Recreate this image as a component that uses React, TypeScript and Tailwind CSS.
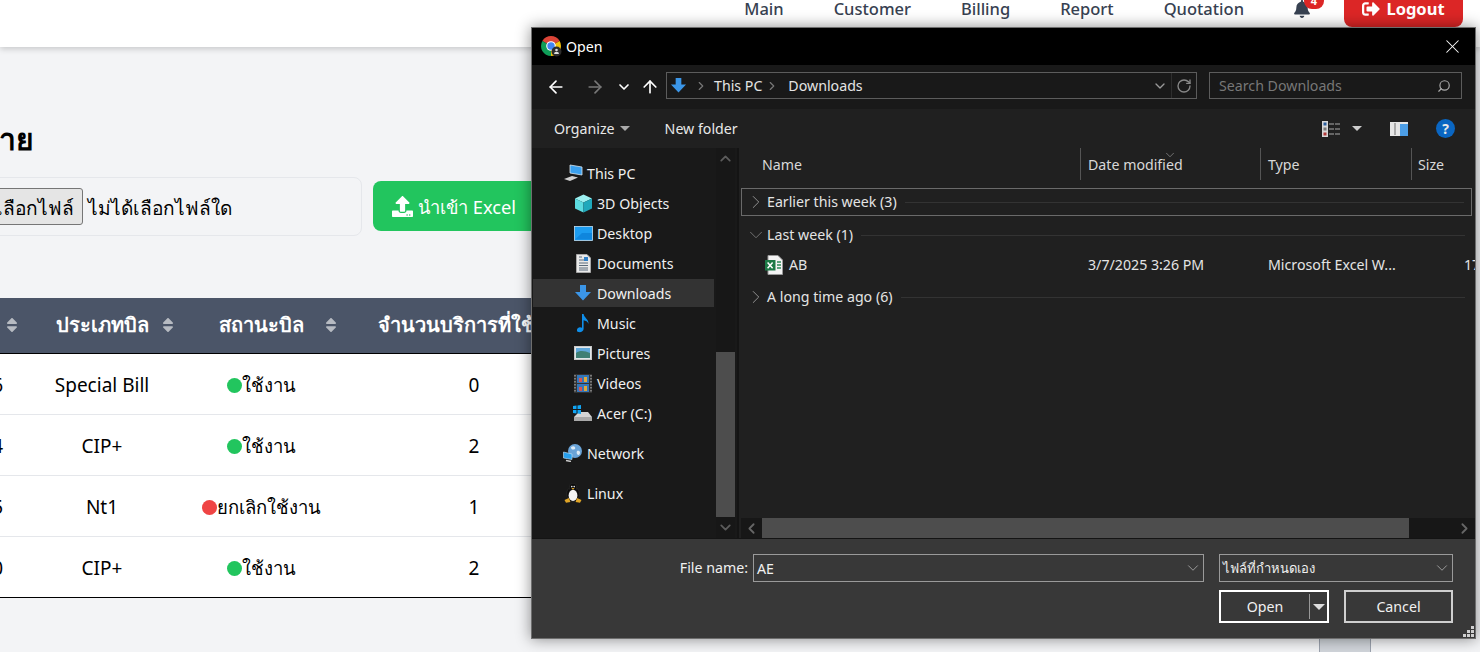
import { ArrowLeft, ArrowRight, ArrowUp, ChevronDown, ChevronLeft, ChevronRight, ChevronUp, RotateCw, Search, X } from "lucide-react";
import { FaBell, FaSignOutAlt, FaSort, FaUpload } from "react-icons/fa";
import React from "react";

const rows = [
  { id: "6", type: "Special Bill", on: true, count: 0 },
  { id: "4", type: "CIP+", on: true, count: 2 },
  { id: "5", type: "Nt1", on: false, count: 1 },
  { id: "0", type: "CIP+", on: true, count: 2 },
];

const ChromeIcon = () => (
  <svg width="21" height="21" viewBox="0 0 21 21">
    <path d="M10 10 L1.34 5 A10 10 0 0 1 18.66 5 Z" fill="#db4437" />
    <path d="M10 10 L18.66 5 A10 10 0 0 1 10 20 Z" fill="#f4c20d" />
    <path d="M10 10 L10 20 A10 10 0 0 1 1.34 5 Z" fill="#0f9d58" />
    <circle cx="10" cy="10" r="4.8" fill="#fff" />
    <circle cx="10" cy="10" r="3.7" fill="#4285f4" />
    <circle cx="15.5" cy="15.5" r="5" fill="#2b2b2b" />
    <circle cx="15.5" cy="14" r="1.3" fill="#ddd" />
    <path d="M13 18 a2.5 2.2 0 0 1 5 0 Z" fill="#ddd" />
  </svg>
);

const DownloadArrow = ({ size = 18 }: { size?: number }) => (
  <svg width={size} height={size} viewBox="0 0 18 18">
    <path d="M6 1 H12 V8 H17 L9 16.5 L1 8 H6 Z" fill="#3b96e8" />
  </svg>
);

const ExcelIcon = () => (
  <svg width="18" height="20" viewBox="0 0 18 20">
    <path d="M3 0.5 H13 L17.5 5 V19.5 H3 Z" fill="#f4f4f4" stroke="#9a9a9a" />
    <path d="M12 7 H16 M12 10 H16 M12 13 H16" stroke="#2b8a57" strokeWidth="1.4" />
    <rect x="0" y="5" width="10.5" height="10.5" fill="#1d7a46" />
    <path d="M2.6 7.4 L7.6 13.2 M7.6 7.4 L2.6 13.2" stroke="#fff" strokeWidth="1.5" />
  </svg>
);

const navIcons: Record<string, React.ReactNode> = {
  pc: (
    <svg width="20" height="18" viewBox="0 0 20 18">
      <path d="M7 1 L19 3 V11 L7 9 Z" fill="#3aa0ee" stroke="#d8e6f0" strokeWidth="0.8" />
      <path d="M1 15 L9 12 L15 13.5 L7 17 Z" fill="#d0d0d0" />
    </svg>
  ),
  cube: (
    <svg width="19" height="19" viewBox="0 0 19 19">
      <path d="M9.5 0.5 L18 4.5 L9.5 8.5 L1 4.5 Z" fill="#9cf0f0" />
      <path d="M1 4.5 L9.5 8.5 V18.5 L1 14.5 Z" fill="#5cdbe0" />
      <path d="M18 4.5 L9.5 8.5 V18.5 L18 14.5 Z" fill="#1fa8bb" />
    </svg>
  ),
  desktop: (
    <svg width="19" height="15" viewBox="0 0 19 15">
      <rect x="0.5" y="0.5" width="18" height="14" fill="#1c9cf0" stroke="#bfe0f5" strokeWidth="0.8" />
      <path d="M1 13.5 L8 7 L18 7 V13.5 Z" fill="#0f86dd" />
    </svg>
  ),
  docs: (
    <svg width="15" height="19" viewBox="0 0 15 19">
      <path d="M0.5 0.5 H11 L14.5 4 V18.5 H0.5 Z" fill="#e9e9e9" stroke="#a8a8a8" />
      <path d="M3 3 H6 M3 6 H8 M3 9 H12 M3 11.5 H12 M3 14 H12 M3 16 H12" stroke="#5b6b7a" />
      <path d="M8 3 H12 V7 H8 Z" fill="#2f80c8" />
    </svg>
  ),
  down: <DownloadArrow size={18} />,
  music: (
    <svg width="14" height="20" viewBox="0 0 14 20">
      <path d="M6 1 H7.6 C8 5 13 6 12.4 11 C12 8.4 9.6 7.6 7.6 7.2 V16 C7.6 18.4 4.6 19.6 2.4 19 C0 18.2 0.8 15 3.2 14.4 C4.2 14.2 5.4 14.4 6 14.8 Z" fill="#0f8ee9" />
    </svg>
  ),
  pics: (
    <svg width="18" height="14" viewBox="0 0 18 14">
      <rect x="0.5" y="0.5" width="17" height="13" fill="#dfe6ea" stroke="#c8c8c8" />
      <rect x="2" y="2" width="14" height="5" fill="#5fa7da" />
      <path d="M2 7 C6 4 11 5 16 7 V12 H2 Z" fill="#3f7f74" />
    </svg>
  ),
  video: (
    <svg width="18" height="19" viewBox="0 0 18 19">
      <rect width="18" height="19" fill="#333" />
      <path d="M1 1 V18 M17 1 V18" stroke="#999" strokeWidth="1.4" strokeDasharray="1.5 1.5" />
      <rect x="3" y="1" width="12" height="8" fill="#3476b9" />
      <rect x="3" y="10" width="12" height="8" fill="#3476b9" />
      <rect x="5" y="4" width="3" height="4" fill="#d9534f" />
      <rect x="10" y="3" width="3" height="5" fill="#e0a93b" />
      <rect x="5" y="13" width="3" height="4" fill="#d9534f" />
      <rect x="10" y="12" width="3" height="5" fill="#e0a93b" />
    </svg>
  ),
  drive: (
    <svg width="20" height="17" viewBox="0 0 20 17">
      <path d="M1 12 L6 7 H15 L19 12 V16 H1 Z" fill="#d5d5d5" />
      <rect x="1" y="12" width="18" height="4" fill="#a9a9a9" />
      <path d="M0 1 L3.5 0.5 V4 H0 Z M4.5 0.4 L8 0 V4 H4.5 Z M0 5 H3.5 V8.5 L0 8 Z M4.5 5 H8 V9 L4.5 8.6 Z" fill="#10a5f5" />
    </svg>
  ),
  network: (
    <svg width="20" height="18" viewBox="0 0 20 18">
      <circle cx="12" cy="7" r="7" fill="#6aa4d8" />
      <path d="M8 3 C11 1 13 3 12 5 C10 6 8 6 8 3 Z M14 7 C17 6 18 9 16 11 C14 11 13 9 14 7 Z" fill="#dce9f3" />
      <path d="M0.5 8 L9 10 V15.5 L0.5 14 Z" fill="#28a0ee" stroke="#cfe4f3" strokeWidth="0.6" />
      <path d="M3 16.5 L8 17.5" stroke="#ccc" strokeWidth="1.4" />
    </svg>
  ),
  linux: (
    <svg width="18" height="20" viewBox="0 0 18 20">
      <ellipse cx="9" cy="11" rx="6.4" ry="7.5" fill="#0c0c0c" stroke="#3a3a3a" strokeWidth="0.4" />
      <ellipse cx="9" cy="4.4" rx="3.6" ry="4.2" fill="#0c0c0c" stroke="#3a3a3a" strokeWidth="0.4" />
      <ellipse cx="9" cy="12.4" rx="4.4" ry="5.6" fill="#f4f4f4" />
      <circle cx="7.8" cy="3.6" r="0.8" fill="#eee" />
      <circle cx="10.2" cy="3.6" r="0.8" fill="#eee" />
      <path d="M7.4 5 L10.6 5 L9 6.8 Z" fill="#e0a526" />
      <path d="M0.5 17 L5 15 L6.4 19 L2 19.8 Z M17.5 17 L13 15 L11.6 19 L16 19.8 Z" fill="#e0a526" />
    </svg>
  ),
};

const navItems = [
  { icon: "pc", label: "This PC", top: true },
  { icon: "cube", label: "3D Objects" },
  { icon: "desktop", label: "Desktop" },
  { icon: "docs", label: "Documents" },
  { icon: "down", label: "Downloads", active: true },
  { icon: "music", label: "Music" },
  { icon: "pics", label: "Pictures" },
  { icon: "video", label: "Videos" },
  { icon: "drive", label: "Acer (C:)" },
  { icon: "network", label: "Network", top: true, gap: true },
  { icon: "linux", label: "Linux", top: true, gap: true },
];

const Caret = ({ className = "" }: { className?: string }) => (
  <span className={`inline-block w-0 h-0 border-x-[5px] border-x-transparent border-t-[5px] ${className}`} />
);

const OpenDialog = () => (
  <div className="absolute left-[531px] top-[27px] w-[945px] h-[612px] border border-[#6e6e6e] flex flex-col text-white text-[14.2px] font-['Noto_Sans',sans-serif] shadow-[0_0_14px_rgba(0,0,0,0.45)]">
    <div className="h-[37px] bg-black flex items-center pl-[9px]">
      <ChromeIcon />
      <span className="ml-[4px]">Open</span>
      <X size={23} strokeWidth={1.1} className="ml-auto mr-[11px]" />
    </div>

    <div className="h-[44px] bg-[#191919] flex items-center pl-[14px]">
      <ArrowLeft size={20} strokeWidth={2} />
      <ArrowRight size={20} strokeWidth={2} className="ml-[19px] text-[#777]" />
      <ChevronDown size={16} strokeWidth={2.5} className="ml-[11px]" />
      <ArrowUp size={20} strokeWidth={2} className="ml-[8px]" />
      <div className="ml-[6px] mb-[3px] w-[531px] h-[27px] border border-[#5c5c5c] flex items-center pl-[3px] text-[#e4e4e4]">
        <DownloadArrow size={17} />
        <ChevronRight size={14} className="ml-[7px] text-[#777]" />
        <span className="ml-[6px]">This PC</span>
        <ChevronRight size={14} className="ml-[3px] text-[#777]" />
        <span className="ml-[9px]">Downloads</span>
        <ChevronDown size={16} className="ml-auto text-[#999]" />
        <div className="ml-[3px] h-full w-px bg-[#2e2e2e]" />
        <RotateCw size={16} className="mx-[4px] text-[#888]" />
      </div>
      <div className="ml-[12px] mb-[3px] w-[253px] h-[27px] border border-[#5c5c5c] flex items-center pl-[9px] pr-[10px] pt-[1px] text-[#777]">
        <span>Search Downloads</span>
        <Search size={14} className="ml-auto text-[#aaa] -scale-x-100" />
      </div>
    </div>

    <div className="h-[39px] bg-[#202020] flex items-center pl-[22px] text-[#e8e8e8]">
      <span>Organize</span>
      <Caret className="ml-[5px] border-t-[#aaa]" />
      <span className="ml-[35px]">New folder</span>
      <svg width="18" height="16" viewBox="0 0 18 16" className="ml-auto">
        <rect width="6" height="16" fill="#d8d8d8" />
        <rect x="1.5" y="1.5" width="3" height="3" fill="#2c5f9e" />
        <rect x="1.5" y="6.5" width="3" height="3" fill="#777" />
        <rect x="1.5" y="11.5" width="3" height="3" fill="#b23a3a" />
        <path d="M7 3 H18 M7 8 H18 M7 13 H18" stroke="#aaa" strokeDasharray="5 1" />
      </svg>
      <Caret className="ml-[12px] border-t-[#ccc]" />
      <svg width="18" height="14" viewBox="0 0 18 14" className="ml-[28px]">
        <rect width="18" height="14" fill="#e6e6e6" />
        <rect x="4" y="1" width="2" height="12" fill="#aaa" />
        <rect x="10" y="2" width="8" height="12" fill="#4c9ee6" />
      </svg>
      <span className="ml-[28px] mr-[20px] w-[19px] h-[19px] rounded-full bg-[#0a66c2] flex items-center justify-center text-[14px] font-bold leading-none">?</span>
    </div>

    <div className="flex h-[390px]">
      <div className="w-[207px] shrink-0 bg-[#191919] flex border-r-2 border-[#141414]">
        <div className="w-[184px] pt-[10px] pl-[1px]">
          {navItems.map((item) => (
            <div key={item.label} className={`h-[30px] flex items-center ${item.gap ? "mt-[10px]" : ""}`}>
              <div className={`w-[181px] h-[28px] flex items-center ${item.top ? "pl-[30px]" : "pl-[40px]"} ${item.active ? "bg-[#333333]" : ""}`}>
                <span className="w-[20px] flex justify-center shrink-0">{navIcons[item.icon]}</span>
                <span className="ml-[4px] pt-[2px] text-[#f0f0f0]">{item.label}</span>
              </div>
            </div>
          ))}
        </div>
        <div className="w-[19px] flex flex-col bg-[#171717]">
          <div className="h-[204px] flex justify-center pt-[2px]">
            <ChevronUp size={17} strokeWidth={2.5} className="text-[#5c5c5c]" />
          </div>
          <div className="h-[165px] bg-[#4d4d4d]" />
          <div className="flex-1 flex justify-center items-center">
            <ChevronDown size={17} strokeWidth={2.5} className="text-[#5c5c5c]" />
          </div>
        </div>
      </div>

      <div className="flex-1 min-w-0 bg-[#202020] flex flex-col relative text-[#e4e4e4] overflow-hidden">
        <ChevronDown size={14} strokeWidth={1} className="absolute left-[424px] top-0 text-[#aaa]" />
        <div className="h-[40px] shrink-0 flex items-start text-[#d8d8d8]">
          <div className="w-[341px] shrink-0 h-[32px] pl-[23px] pt-[2px] flex items-center">Name</div>
          <div className="w-[180px] shrink-0 h-[32px] pl-[7px] pt-[2px] flex items-center border-l border-[#555]">Date modified</div>
          <div className="w-[151px] shrink-0 h-[32px] pl-[7px] pt-[2px] flex items-center border-l border-[#555]">Type</div>
          <div className="flex-1 h-[32px] pl-[6px] pt-[2px] flex items-center border-l border-[#555]">Size</div>
        </div>

        <div className="ml-[2px] mr-[3px] h-[28px] shrink-0 border border-[#6a6a6a] flex items-center pl-[3px]">
          <ChevronRight size={22} strokeWidth={1} className="text-[#999]" />
          <span>Earlier this week (3)</span>
          <div className="ml-[8px] flex-1 mr-[7px] h-px bg-[#333]" />
        </div>
        <div className="mt-[7px] h-[24px] shrink-0 flex items-center pl-[6px]">
          <ChevronDown size={22} strokeWidth={1} className="text-[#777]" />
          <span>Last week (1)</span>
          <div className="ml-[8px] flex-1 mr-[10px] h-px bg-[#333]" />
        </div>
        <div className="mt-[3px] h-[30px] shrink-0 flex items-center">
          <div className="w-[341px] shrink-0 flex items-center pl-[26px]">
            <ExcelIcon />
            <span className="ml-[6px]">AB</span>
          </div>
          <div className="w-[180px] shrink-0 pl-[8px] whitespace-nowrap">3/7/2025 3:26 PM</div>
          <div className="w-[204px] shrink-0 pl-[8px] whitespace-nowrap">Microsoft Excel W...</div>
          <div className="whitespace-nowrap">17 KB</div>
        </div>
        <div className="mt-[5px] h-[24px] shrink-0 flex items-center pl-[6px]">
          <ChevronRight size={22} strokeWidth={1} className="text-[#999]" />
          <span>A long time ago (6)</span>
          <div className="ml-[8px] flex-1 mr-[10px] h-px bg-[#333]" />
        </div>

        <div className="mt-auto ml-[2px] h-[20px] shrink-0 flex bg-[#171717] items-center">
          <ChevronLeft size={17} strokeWidth={2.5} className="w-[21px] text-[#666]" />
          <div className="w-[647px] h-full bg-[#4d4d4d]" />
          <ChevronRight size={17} strokeWidth={2.5} className="ml-auto mr-[2px] text-[#666]" />
        </div>
      </div>
    </div>

    <div className="flex-1 bg-[#383838] border-t border-[#141414] relative pr-[22px] pt-[15px] text-[#f0f0f0]">
      <div className="flex justify-end items-center h-[28px]">
        <span className="mr-[5px]">File name:</span>
        <div className="w-[451px] h-[28px] border border-[#9a9a9a] flex items-center pl-[3px]">
          <span className="pt-[2px]">AE</span>
          <ChevronDown size={18} strokeWidth={1} className="ml-auto mr-[1px] text-[#bbb]" />
        </div>
        <div className="ml-[15px] w-[234px] h-[28px] border border-[#9a9a9a] flex items-center pl-[3px]">
          <span className="pt-[2px] text-[13px]">ไฟล์ที่กำหนดเอง</span>
          <ChevronDown size={18} strokeWidth={1} className="ml-auto mr-[1px] text-[#bbb]" />
        </div>
      </div>
      <div className="flex justify-end mt-[8px]">
        <div className="w-[110px] h-[33px] border-2 border-white flex items-center">
          <span className="w-[88px] text-center">Open</span>
          <div className="h-[25px] w-px bg-[#999]" />
          <Caret className="ml-[3px] border-t-[#ddd] border-x-[6px] border-t-[6px]" />
        </div>
        <div className="ml-[15px] w-[109px] h-[33px] border-2 border-[#cfcfcf] flex items-center justify-center">Cancel</div>
      </div>
      <svg width="11" height="11" viewBox="0 0 11 11" className="absolute right-[1px] bottom-[1px]">
        <path d="M8 0 H11 V3 H8 Z M4 4 H7 V7 H4 Z M8 4 H11 V7 H8 Z M0 8 H3 V11 H0 Z M4 8 H7 V11 H4 Z M8 8 H11 V11 H8 Z" fill="#cfcfcf" />
      </svg>
    </div>
  </div>
);

export default function App() {
  return (
    <div className="relative h-[652px] w-[1480px] overflow-hidden bg-[#f3f4f6] text-black font-['Noto_Sans',sans-serif]">
      <nav className="h-[47px] bg-white shadow-[0_2px_6px_rgba(0,0,0,0.18)] flex justify-end items-start pr-[17px]">
        <div className="-mt-[9px] h-[36px] flex items-center text-[16.5px] font-medium text-[#374151] gap-[50px]">
          <span>Main</span>
          <span>Customer</span>
          <span>Billing</span>
          <span>Report</span>
          <span>Quotation</span>
          <span className="relative -ml-[1px]">
            <FaBell size={18} className="text-[#374151]" />
            <span className="absolute left-[11px] -top-[7px] w-[20px] h-[16px] rounded-full bg-[#dc2626] text-white text-[11px] font-bold flex items-center justify-center">4</span>
          </span>
          <div className="ml-[-17px] h-[36px] w-[119px] rounded-lg bg-[#dc2626] text-white font-bold text-[16.5px] flex items-center justify-center gap-[6px]">
            <FaSignOutAlt size={18} />
            <span>Logout</span>
          </div>
        </div>
      </nav>

      <h1 className="mt-[72px] -ml-[1px] h-[42px] text-[30px] leading-[40px] font-bold">าย</h1>

      <div className="mt-[16px] flex items-start">
        <div className="-ml-[10px] w-[372px] h-[59px] border border-[#e5e7eb] rounded-lg flex items-center">
          <button className="-ml-[10px] h-[37px] w-[102px] shrink-0 px-2 pt-[3px] border border-[#767676] rounded-[3px] bg-[#e5e5e5] text-[19.1px] whitespace-nowrap flex items-center justify-end">เลือกไฟล์</button>
          <span className="ml-[5px] pt-[3px] text-[19.1px]">ไม่ได้เลือกไฟล์ใด</span>
        </div>
        <button className="ml-[11px] mt-[4px] w-[170px] h-[50px] rounded-lg bg-[#22c55e] text-white text-[18.3px] flex items-center pl-[19px] gap-[5px]">
          <FaUpload size={21} />
          <span className="pt-[2px]">นำเข้า Excel</span>
        </button>
      </div>

      <table className="mt-[62px] -ml-[40px] w-[840px] table-fixed border-collapse text-[19px]">
        <thead>
          <tr className="h-[55px] bg-[#4b5568] text-white border-b border-black">
            <th className="w-[62px] relative">
              <FaSort size={18} className="absolute right-[1px] top-[18px] text-[#b7bbc2]" />
            </th>
            <th className="w-[160px] relative font-bold text-[20px]">
              ประเภทบิล
              <FaSort size={18} className="absolute right-[5px] top-[18px] text-[#b7bbc2]" />
            </th>
            <th className="w-[158px] relative font-bold text-[20px]">
              สถานะบิล
              <FaSort size={18} className="absolute right-0 top-[18px] text-[#b7bbc2]" />
            </th>
            <th className="w-[268px] font-bold text-[20px] whitespace-nowrap">จำนวนบริการที่ใช้งาน</th>
            <th />
          </tr>
        </thead>
        <tbody>
          {rows.map((row, i) => (
            <tr key={i} className={`h-[61px] bg-white border-b ${i === rows.length - 1 ? "border-black" : "border-[#e5e7eb]"}`}>
              <td className="text-right pr-[19px] pt-[3px]">{row.id}</td>
              <td className="text-center pt-[3px]">{row.type}</td>
              <td className="pt-[3px]">
                <div className="flex items-center justify-center text-[18.5px]">
                  <span className={`w-[15px] h-[15px] rounded-full ${row.on ? "bg-[#22c55e]" : "bg-[#ef4444]"}`} />
                  <span>{row.on ? "ใช้งาน" : "ยกเลิกใช้งาน"}</span>
                </div>
              </td>
              <td className="text-center pt-[3px]">{row.count}</td>
              <td />
            </tr>
          ))}
        </tbody>
      </table>

      <div className="mt-[40px] flex justify-end pr-[109px]">
        <div className="w-[52px] h-[40px] bg-[#d1d5db] border-x border-[#9ca3af]" />
      </div>

      <OpenDialog />
    </div>
  );
}
